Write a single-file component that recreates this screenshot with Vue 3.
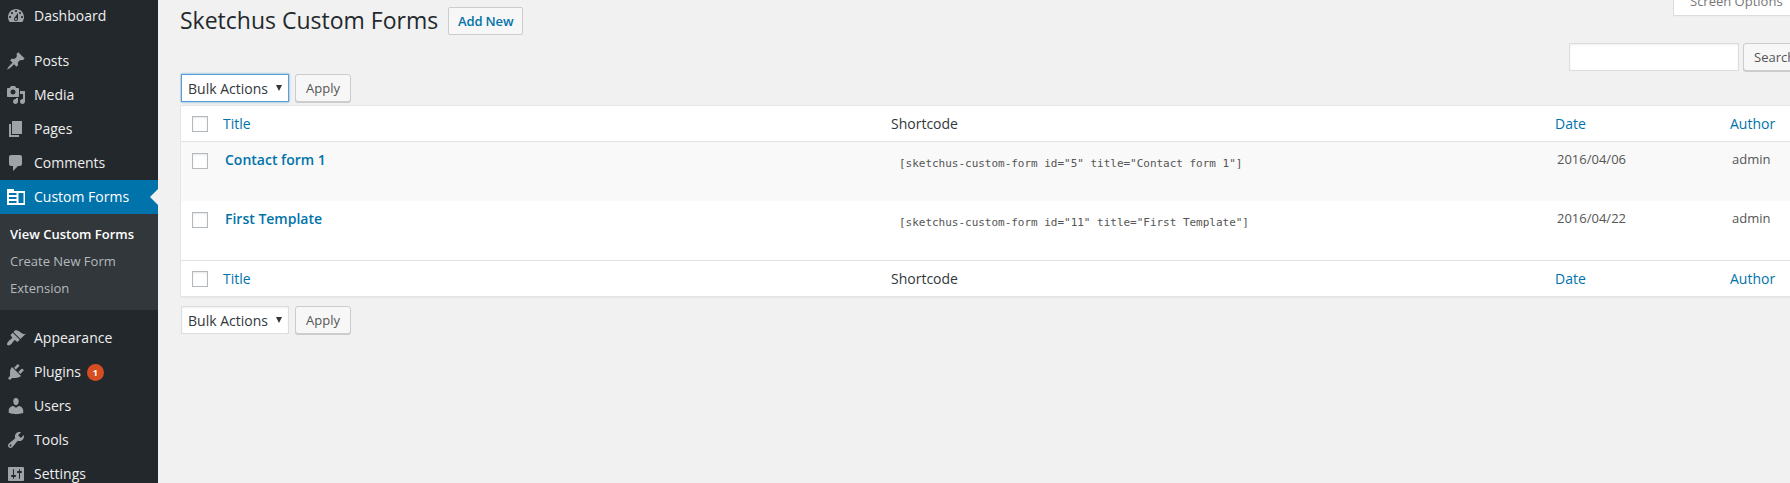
<script setup>
const icons = {
  dashboard: 'M3.76 16h12.48c1.1-1.37 1.76-3.11 1.76-5 0-4.42-3.58-8-8-8s-8 3.58-8 8c0 1.89.66 3.63 1.76 5zM10 4c.55 0 1 .45 1 1s-.45 1-1 1-1-.45-1-1 .45-1 1-1zM6 6c.55 0 1 .45 1 1s-.45 1-1 1-1-.45-1-1 .45-1 1-1zm8 0c.55 0 1 .45 1 1s-.45 1-1 1-1-.45-1-1 .45-1 1-1zm-5.37 5.55L12 7v6c0 1.1-.9 2-2 2s-2-.9-2-2c0-.57.24-1.08.63-1.45zM4 10c.55 0 1 .45 1 1s-.45 1-1 1-1-.45-1-1 .45-1 1-1zm12 0c.55 0 1 .45 1 1s-.45 1-1 1-1-.45-1-1 .45-1 1-1zm-5 3c0-.55-.45-1-1-1s-1 .45-1 1 .45 1 1 1 1-.45 1-1z',
  posts: 'M10.44 3.02l1.82-1.82 6.36 6.35-1.83 1.82c-1.05-.68-2.48-.57-3.41.36l-.75.75c-.92.93-1.04 2.35-.35 3.41l-1.83 1.82-2.41-2.41-2.8 2.79c-.42.42-3.38 2.71-3.8 2.29s1.86-3.39 2.28-3.81l2.79-2.79L4.1 9.36l1.83-1.82c1.05.69 2.48.57 3.4-.36l.75-.75c.93-.92 1.05-2.35.36-3.41z',
  media: 'M13 11V4c0-.55-.45-1-1-1h-1.67L9 1H5L3.67 3H2c-.55 0-1 .45-1 1v7c0 .55.45 1 1 1h10c.55 0 1-.45 1-1zM7 4.5c1.38 0 2.5 1.12 2.5 2.5S8.38 9.5 7 9.5 4.5 8.38 4.5 7 5.62 4.5 7 4.5zM14 6h5v10.5c0 1.38-1.12 2.5-2.5 2.5S14 17.88 14 16.5s1.12-2.5 2.5-2.5c.17 0 .34.02.5.05V9h-3V6zm-4 8.05V13h2v3.5c0 1.38-1.12 2.5-2.5 2.5S7 17.88 7 16.5 8.12 14 9.5 14c.17 0 .34.02.5.05z',
  pages: 'M6 15V2h10v13H6zm-1 1h8v2H3V5h2v11z',
  comments: 'M5 2h9c1.1 0 2 .9 2 2v7c0 1.1-.9 2-2 2h-2l-5 5v-5H5c-1.1 0-2-.9-2-2V4c0-1.1.9-2 2-2z',
  forms: 'M1 2h7v2h11v14H1zM3 6v2h7.500V6zM3 10v2h7.500v-2zM3 14v2h7.500v-2zM12.500 6v10h5V6z',
  appearance: 'M14.48 11.06L7.41 3.99l1.5-1.5c.5-.56 2.3-.47 3.51.32 1.21.8 1.43 1.28 2.91 2.1 1.18.64 2.45 1.26 4.45.85zm-.71.71L6.7 4.7 4.93 6.47c-.39.39-.39 1.02 0 1.41l1.06 1.06c.39.39.39 1.03 0 1.42-.6.6-1.43 1.11-2.21 1.69-.35.26-.7.53-1.01.84C1.43 14.23.4 16.08 1.4 17.07c.99 1 2.84-.03 4.18-1.36.31-.31.58-.66.85-1.02.57-.78 1.08-1.61 1.69-2.21.39-.39 1.02-.39 1.41 0l1.06 1.06c.39.39 1.02.39 1.41 0z',
  plugins: 'M13.11 4.36L9.87 7.6 8 5.73l3.24-3.24c.35-.34 1.05-.2 1.56.32.52.51.66 1.21.31 1.55zm-8 1.77l.91-1.12 9.01 9.01-1.19.84c-.71.71-2.63 1.16-3.82 1.16H6.14L4.9 17.26c-.59.59-1.54.59-2.12 0-.59-.58-.59-1.53 0-2.12l1.24-1.24v-3.88c0-1.13.4-3.19 1.09-3.89zm7.26 3.97l3.24-3.24c.34-.35 1.04-.21 1.55.31.52.51.66 1.21.31 1.55l-3.24 3.25z',
  users: 'M10 9.25c-2.27 0-2.73-3.44-2.73-3.44C7 4.02 7.82 2 9.97 2c2.16 0 2.98 2.02 2.71 3.81 0 0-.41 3.44-2.68 3.44zm0 2.57L12.72 10c2.39 0 4.52 2.33 4.52 4.53v2.49s-3.65 1.13-7.24 1.13c-3.65 0-7.24-1.13-7.24-1.13v-2.49c0-2.25 1.94-4.48 4.47-4.48z',
  tools: 'M16.68 9.77c-1.34 1.34-3.3 1.67-4.95.99l-5.41 6.52c-.99.99-2.59.99-3.58 0s-.99-2.59 0-3.57l6.52-5.42c-.68-1.65-.35-3.61.99-4.95 1.28-1.28 3.12-1.62 4.72-1.06l-2.89 2.89 2.82 2.82 2.86-2.87c.53 1.58.18 3.39-1.08 4.65zM3.81 16.21c.4.39 1.04.39 1.43 0 .4-.4.4-1.04 0-1.43-.39-.4-1.03-.4-1.43 0-.39.39-.39 1.03 0 1.43z',
  settings: 'M18 16V4c0-.55-.45-1-1-1H3c-.55 0-1 .45-1 1v12c0 .55.45 1 1 1h14c.55 0 1-.45 1-1zM8 11h1c.55 0 1 .45 1 1s-.45 1-1 1H8v1.5c0 .28-.22.5-.5.5s-.5-.22-.5-.5V13H6c-.55 0-1-.45-1-1s.45-1 1-1h1V5.5c0-.28.22-.5.5-.5s.5.22.5.5V11zm5-2h-1c-.55 0-1-.45-1-1s.45-1 1-1h1V5.5c0-.28.22-.5.5-.5s.5.22.5.5V7h1c.55 0 1 .45 1 1s-.45 1-1 1h-1v5.5c0 .28-.22.5-.5.5s-.5-.22-.5-.5V9z',
}
const menu = [
  { label: 'Dashboard', icon: 'dashboard', gap: true },
  { label: 'Posts', icon: 'posts' },
  { label: 'Media', icon: 'media' },
  { label: 'Pages', icon: 'pages' },
  { label: 'Comments', icon: 'comments' },
  { label: 'Custom Forms', icon: 'forms', gap: true, sub: ['View Custom Forms', 'Create New Form', 'Extension'] },
  { label: 'Appearance', icon: 'appearance' },
  { label: 'Plugins', icon: 'plugins', badge: 1 },
  { label: 'Users', icon: 'users' },
  { label: 'Tools', icon: 'tools' },
  { label: 'Settings', icon: 'settings' },
]
const rows = [
  { title: 'Contact form 1', code: '[sketchus-custom-form id="5" title="Contact form 1"]', date: '2016/04/06', author: 'admin' },
  { title: 'First Template', code: '[sketchus-custom-form id="11" title="First Template"]', date: '2016/04/22', author: 'admin' },
]
</script>

<template>
  <div class="admin">
    <nav class="sidebar">
      <div v-for="m in menu" :key="m.label" class="group" :class="{ gap: m.gap }">
        <a class="item" :class="{ current: m.sub }">
          <svg class="icon" viewBox="0 0 20 20"><path fill-rule="evenodd" :d="icons[m.icon]" /></svg>
          <span>{{ m.label }}</span>
          <span v-if="m.badge" class="badge">{{ m.badge }}</span>
        </a>
        <div v-if="m.sub" class="submenu">
          <a v-for="(s, i) in m.sub" :key="s" :class="{ on: i === 0 }"><span>{{ s }}</span></a>
        </div>
      </div>
    </nav>

    <main class="content">
      <div class="screen-options">Screen Options</div>
      <header class="heading">
        <h1>Sketchus Custom Forms</h1>
        <a class="add-new">Add New</a>
      </header>
      <div class="search">
        <input type="text" />
        <button class="button">Search</button>
      </div>
      <div class="bulk top">
        <div class="select focus"><span>Bulk Actions</span><i class="arrow"></i></div>
        <button class="button">Apply</button>
      </div>
      <section class="table">
        <div class="row head">
          <i class="check"></i><a class="title">Title</a><span class="code">Shortcode</span><a class="date">Date</a><a class="author">Author</a>
        </div>
        <div v-for="(r, i) in rows" :key="r.title" class="row data" :class="{ alt: i === 0 }">
          <i class="check"></i><a class="title">{{ r.title }}</a><span class="code">{{ r.code }}</span><span class="date">{{ r.date }}</span><span class="author">{{ r.author }}</span>
        </div>
        <div class="row head foot">
          <i class="check"></i><a class="title">Title</a><span class="code">Shortcode</span><a class="date">Date</a><a class="author">Author</a>
        </div>
      </section>
      <div class="bulk bottom">
        <div class="select"><span>Bulk Actions</span><i class="arrow"></i></div>
        <button class="button">Apply</button>
      </div>
    </main>
  </div>
</template>

<style>
body { margin: 0; overflow: hidden; background: #f1f1f1; }
</style>

<style scoped>
* { box-sizing: border-box; }
.admin { display: flex; width: 1790px; height: 483px; overflow: hidden; background: #f1f1f1; font-family: "Open Sans", sans-serif; font-size: 13px; color: #444; }
.sidebar { flex: 0 0 158px; height: 483px; overflow: hidden; background: #23282d; margin-right: 22px; }
.sidebar .group:first-child { margin-top: -1px; }
.group.gap { margin-bottom: 11px; }
.item { position: relative; display: flex; align-items: center; height: 34px; padding-left: 6px; color: #eee; font-size: 14px; line-height: 18px; }
.icon { width: 20px; height: 20px; margin-right: 8px; fill: rgba(240, 245, 250, .6); }
.current { background: #0073aa; color: #fff; }
.current .icon { fill: #fff; }
.current::after { content: ""; position: absolute; right: 0; top: 9px; border: 8px solid transparent; border-right-color: #f1f1f1; border-left: 0; }
.badge { width: 17px; height: 17px; margin: 1px 0 0 6px; border-radius: 9px; background: #d54e21; color: #fff; font-size: 9px; font-weight: 700; line-height: 17px; text-align: center; }
.submenu { height: 96px; padding: 6px 10px 9px; background: #32373c; }
.submenu a { display: flex; align-items: center; height: 27px; color: #b4b9be; font-size: 13px; }
.submenu .on { color: #fff; font-weight: 600; }

.content { position: relative; flex: 1; min-width: 0; overflow: hidden; }
.screen-options { position: absolute; left: 1493px; top: -12px; width: 140px; height: 28px; padding: 0 16px; border: 1px solid #ddd; background: #fff; box-shadow: 0 1px 1px -1px rgba(0, 0, 0, .1); color: #777; line-height: 25px; white-space: nowrap; }
.heading { display: flex; align-items: center; height: 43px; }
h1 { margin: 0 10px 2px 0; font-size: 23px; font-weight: 400; line-height: 29px; color: #23282d; white-space: nowrap; }
.add-new { width: 75px; height: 28px; margin-bottom: 1px; border: 1px solid #ccc; border-radius: 2px; background: #f7f7f7; color: #0073aa; font-weight: 600; line-height: 26px; letter-spacing: -.15px; text-align: center; }
.search { display: flex; gap: 4px; height: 30px; margin-left: 1389px; }
.search input { flex: none; width: 170px; height: 28px; padding: 0; border: 1px solid #ddd; background: #fff; box-shadow: inset 0 1px 2px rgba(0, 0, 0, .07); }
.button { flex: none; height: 28px; padding: 0 10px; border: 1px solid #ccc; border-radius: 3px; background: #f7f7f7; box-shadow: 0 1px 0 #ccc; color: #555; font-family: inherit; font-size: 13px; line-height: 26px; }
.bulk { display: flex; gap: 6px; height: 28px; padding-left: 1px; }
.top { margin: 1px 0 3px; }
.bottom { margin-top: 9px; }
.select { display: flex; align-items: center; justify-content: space-between; width: 108px; height: 28px; padding: 0 6px; border: 1px solid #ddd; background: #fff; box-shadow: inset 0 1px 2px rgba(0, 0, 0, .07); color: #32373c; font-size: 14px; white-space: nowrap; }
.select.focus { border-color: #5b9dd9; box-shadow: 0 0 2px rgba(30, 140, 190, .8); }
.arrow { border: 3px solid transparent; border-top: 6px solid #32373c; border-bottom: 0; }

.table { width: 1700px; border: 1px solid #e5e5e5; background: #fff; box-shadow: 0 1px 1px rgba(0, 0, 0, .04); }
.row { display: grid; grid-template-columns: 42px 668px 664px 175px 120px; align-items: start; }
.head { height: 36px; padding-top: 8px; border-bottom: 1px solid #e1e1e1; color: #32373c; font-size: 14px; line-height: 19px; }
.head a, .data .title { color: #0073aa; }
.foot { border-top: 1px solid #e1e1e1; border-bottom: 0; }
.check { width: 16px; height: 16px; margin: 2px 0 0 11px; border: 1px solid #b4b9be; background: #fff; box-shadow: inset 0 1px 2px rgba(0, 0, 0, .1); }
.data { height: 59px; padding-top: 8px; color: #555; line-height: 20px; }
.data.alt { background: #f9f9f9; }
.data .check { margin-top: 3px; }
.data .title { padding-left: 2px; font-size: 14px; font-weight: 600; }
.data .code { padding: 4px 0 0 8px; font-family: "DejaVu Sans Mono", monospace; font-size: 11px; letter-spacing: -.02px; }
.data .date, .data .author { padding-left: 2px; line-height: 18px; }
</style>
